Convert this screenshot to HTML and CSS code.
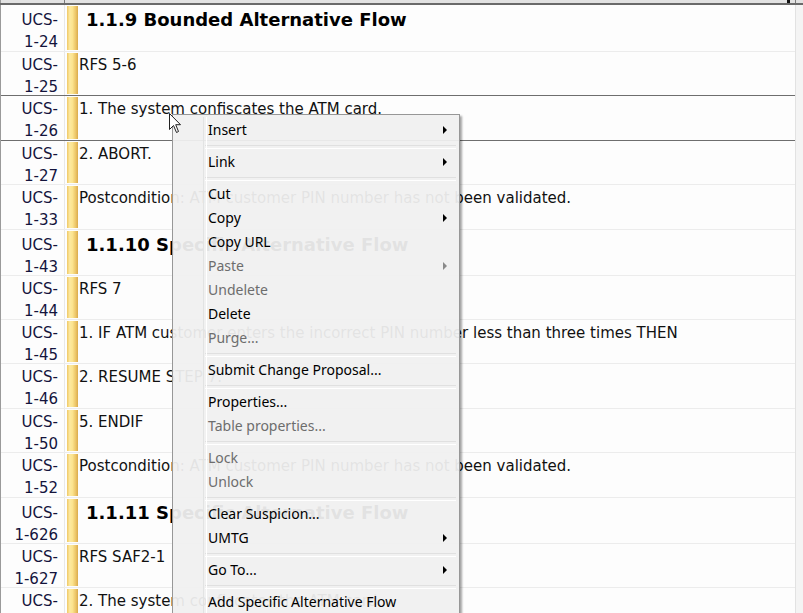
FILE: index.html
```html
<!DOCTYPE html>
<html>
<head>
<meta charset="utf-8">
<link rel="stylesheet" href="styles.css">
</head>
<body>
<div class="screen">
  <div class="header">
    <div class="h-label"></div>
    <div class="h-main"><span class="h-mark"></span></div>
    <div class="h-side"></div>
  </div>
  <div class="body">
    <div class="table">
      <div class="row heading first"><div class="label">UCS-<br>1-24</div><div class="bar"></div><div class="content"><h2>1.1.9 Bounded Alternative Flow</h2></div></div>
      <div class="row dark"><div class="label">UCS-<br>1-25</div><div class="bar"></div><div class="content">RFS 5-6</div></div>
      <div class="row dark"><div class="label">UCS-<br>1-26</div><div class="bar"></div><div class="content">1. The system confiscates the ATM card.</div></div>
      <div class="row"><div class="label">UCS-<br>1-27</div><div class="bar"></div><div class="content">2. ABORT.</div></div>
      <div class="row"><div class="label">UCS-<br>1-33</div><div class="bar"></div><div class="content">Postcondition: ATM customer PIN number has not been validated.</div></div>
      <div class="row heading"><div class="label">UCS-<br>1-43</div><div class="bar"></div><div class="content"><h2>1.1.10 Specific Alternative Flow</h2></div></div>
      <div class="row"><div class="label">UCS-<br>1-44</div><div class="bar"></div><div class="content">RFS 7</div></div>
      <div class="row"><div class="label">UCS-<br>1-45</div><div class="bar"></div><div class="content">1. IF ATM customer enters the incorrect PIN number less than three times THEN</div></div>
      <div class="row"><div class="label">UCS-<br>1-46</div><div class="bar"></div><div class="content">2. RESUME STEP 7.</div></div>
      <div class="row"><div class="label">UCS-<br>1-50</div><div class="bar"></div><div class="content">5. ENDIF</div></div>
      <div class="row"><div class="label">UCS-<br>1-52</div><div class="bar"></div><div class="content">Postcondition: ATM customer PIN number has not been validated.</div></div>
      <div class="row heading"><div class="label">UCS-<br>1-626</div><div class="bar"></div><div class="content"><h2>1.1.11 Specific Alternative Flow</h2></div></div>
      <div class="row"><div class="label">UCS-<br>1-627</div><div class="bar"></div><div class="content">RFS SAF2-1</div></div>
      <div class="row"><div class="label">UCS-<br>1-628</div><div class="bar"></div><div class="content">2. The system confiscates the ATM card.</div></div>
    </div>
    <div class="side"></div>
  </div>

  <div class="menu">
    <div class="item sub">Insert</div>
    <div class="sep"></div>
    <div class="item sub">Link</div>
    <div class="sep"></div>
    <div class="item">Cut</div>
    <div class="item sub">Copy</div>
    <div class="item">Copy URL</div>
    <div class="item sub off">Paste</div>
    <div class="item off">Undelete</div>
    <div class="item">Delete</div>
    <div class="item off">Purge...</div>
    <div class="sep"></div>
    <div class="item">Submit Change Proposal...</div>
    <div class="sep"></div>
    <div class="item">Properties...</div>
    <div class="item off">Table properties...</div>
    <div class="sep"></div>
    <div class="item off">Lock</div>
    <div class="item off">Unlock</div>
    <div class="sep"></div>
    <div class="item">Clear Suspicion...</div>
    <div class="item sub">UMTG</div>
    <div class="sep"></div>
    <div class="item sub">Go To...</div>
    <div class="sep"></div>
    <div class="item">Add Specific Alternative Flow</div>
  </div>

  <svg class="cursor" width="13" height="21" viewBox="0 0 13 21">
    <path d="M0.5 0.5 L0.5 16.5 L4.5 12.5 L7.5 19.5 L9.5 18.5 L6.7 11.7 L11.5 11.7 Z" fill="#fff" stroke="#222" stroke-width="1" stroke-linejoin="miter"/>
  </svg>
</div>
</body>
</html>
```

FILE: styles.css
```css
* { box-sizing: border-box; }
html, body { margin: 0; padding: 0; }
body { background: #fdfdfd; overflow: hidden; }

.screen {
  position: relative;
  width: 803px;
  height: 613px;
  overflow: hidden;
  font-family: "DejaVu Sans", sans-serif;
  color: #111;
}

.header {
  display: flex;
  height: 5px;
  background: #e2e2e2;
  border-bottom: 2px solid #6a6a6a;
}
.h-label { width: 65px; border-left: 1px solid #9a9a9a; border-right: 1px solid #7a7a7a; }
.h-main { flex: 1; position: relative; border-right: 1px solid #7a7a7a; }
.h-mark { position: absolute; right: 5px; top: 0; width: 3px; height: 3px; background: #111; }
.h-side { width: 7px; }

.body { display: flex; height: 608px; }
.table { width: 796px; border-left: 1px solid #9a9a9a; border-right: 1px solid #e2e2e2; background: #fdfdfd; }
.side { flex: 1; background: #f4f4f4; }

.row {
  display: flex;
  height: 44.4px;
  border-bottom: 1px solid #ececec;
  font-size: 15px;
  line-height: 22px;
}
.row.dark { border-bottom-color: #6e6e6e; }
.row.heading { height: 46px; }
.row.first { height: 47px; }

.label {
  width: 64px;
  flex: none;
  border-right: 1px solid #e8e8e8;
  text-align: right;
  padding: 2px 6px 0 0;
  color: #14143c;
}
.heading .label { padding-top: 4px; }

.bar {
  width: 11px;
  flex: none;
  margin: 1px 0 1px 2px;
  background: linear-gradient(90deg, #efc865 0%, #fde9a0 25%, #fbe38e 50%, #ecc466 80%, #d9aa4c 100%);
}

.content { padding: 2px 0 0 1px; white-space: nowrap; }
.content h2 {
  margin: 0;
  padding: 2px 0 0 7px;
  font-size: 18px;
  line-height: 22px;
  font-weight: bold;
  color: #000;
}

.menu {
  position: absolute;
  left: 172px;
  top: 114px;
  width: 288px;
  padding: 3px 2px 2px 2px;
  background: rgba(240, 240, 240, 0.94);
  border: 1px solid #979797;
  box-shadow: 2px 2px 2px rgba(0, 0, 0, 0.35);
  font-family: "Noto Sans", "Open Sans", sans-serif;
  font-size: 14px;
  color: #000;
}
.menu::before {
  content: "";
  position: absolute;
  left: 30px;
  top: 2px;
  bottom: 2px;
  width: 2px;
  border-left: 1px solid #e2e3e3;
  border-right: 1px solid #ffffff;
}
.item {
  position: relative;
  height: 24px;
  line-height: 24px;
  padding-left: 33px;
}
.item.off { color: #6d6d6d; }
.item.sub::after {
  content: "";
  position: absolute;
  right: 10px;
  top: 8px;
  border-left: 4px solid #000;
  border-top: 4px solid transparent;
  border-bottom: 4px solid transparent;
}
.item.sub.off::after { border-left-color: #8a8a8a; }
.sep {
  height: 8px;
  margin-left: 30px;
  margin-right: 1px;
  padding-top: 3px;
}
.sep::before {
  content: "";
  display: block;
  height: 2px;
  border-top: 1px solid #e0e0e0;
  border-bottom: 1px solid #ffffff;
}

.cursor {
  position: absolute;
  left: 169px;
  top: 113px;
}
```
